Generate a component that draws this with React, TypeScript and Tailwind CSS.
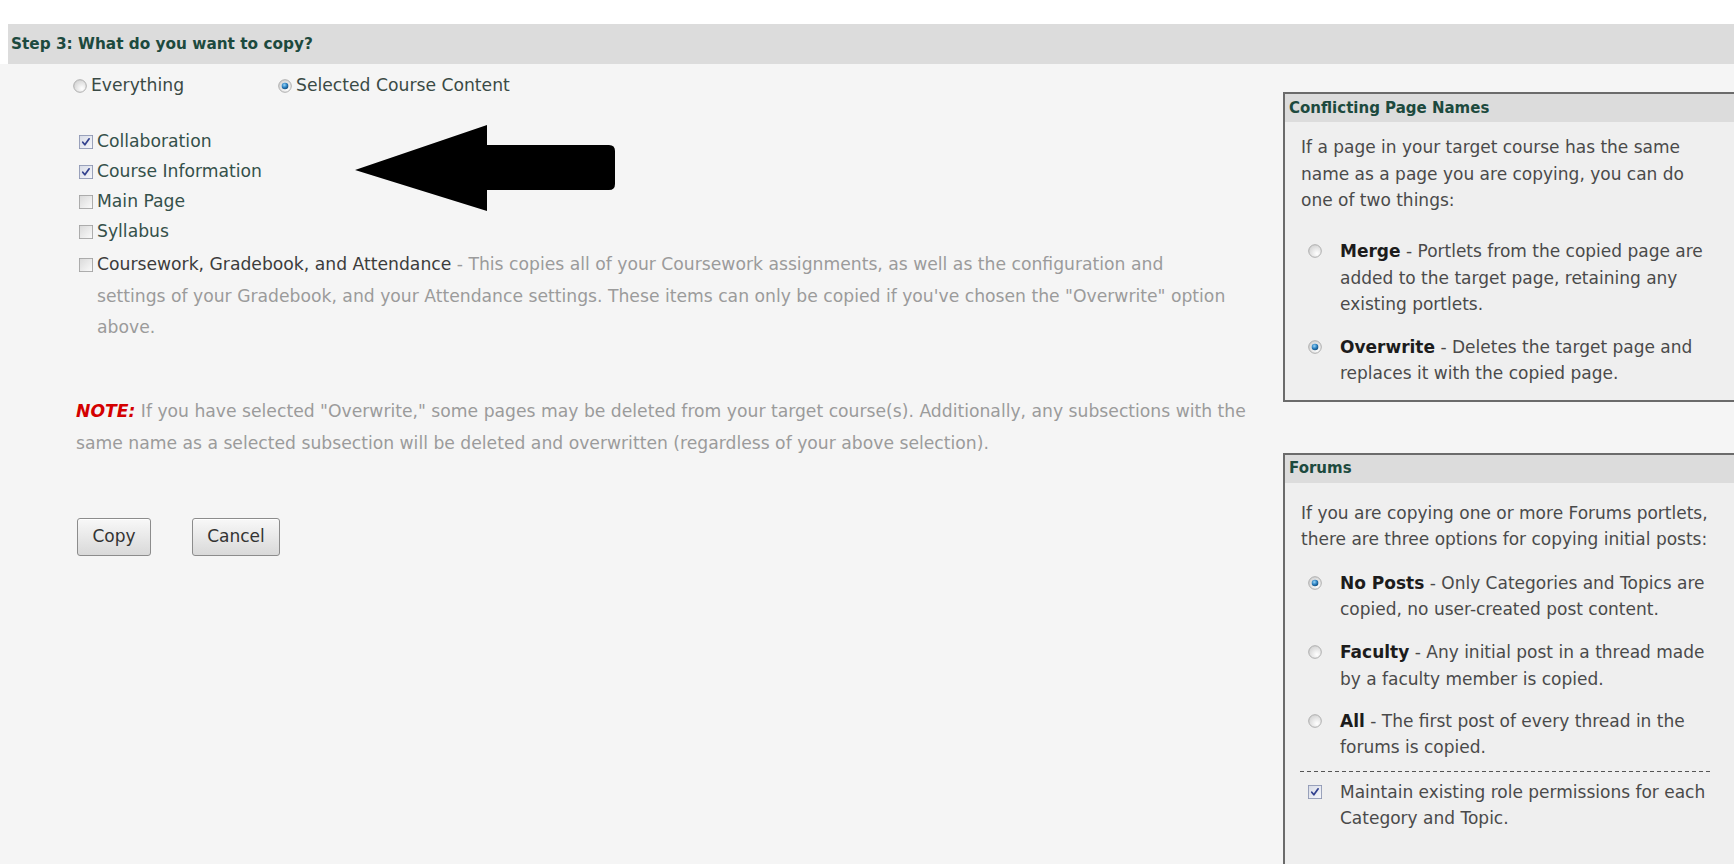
import React from "react";

// XP-style radio button
const Radio = ({ checked = false }: { checked?: boolean }) => (
  <svg width="14" height="14" viewBox="0 0 16 16" className="shrink-0">
    <defs>
      <radialGradient id="radio-face" cx="65%" cy="70%" r="75%">
        <stop offset="0%" stopColor="#ffffff" />
        <stop offset="100%" stopColor="#d2d2d2" />
      </radialGradient>
      <radialGradient id="radio-dot" cx="40%" cy="35%" r="70%">
        <stop offset="0%" stopColor="#9ad6f7" />
        <stop offset="55%" stopColor="#2a7fc0" />
        <stop offset="100%" stopColor="#14466e" />
      </radialGradient>
    </defs>
    <circle cx="8" cy="8" r="7.2" fill="url(#radio-face)" stroke="#a6a6a6" strokeWidth="1" />
    {checked && <circle cx="8" cy="8" r="3.8" fill="url(#radio-dot)" />}
  </svg>
);

// XP-style checkbox
const Check = ({ checked = false }: { checked?: boolean }) => (
  <svg width="14" height="14" viewBox="0 0 16 16" className="shrink-0">
    <defs>
      <linearGradient id="cb-face" x1="0" y1="0" x2="1" y2="1">
        <stop offset="0%" stopColor="#d9d9d9" />
        <stop offset="100%" stopColor="#fbfbfb" />
      </linearGradient>
      <linearGradient id="cb-face-on" x1="0" y1="0" x2="1" y2="1">
        <stop offset="0%" stopColor="#d7dbe6" />
        <stop offset="100%" stopColor="#f7f8fc" />
      </linearGradient>
    </defs>
    <rect
      x="0.5"
      y="0.5"
      width="15"
      height="15"
      fill={checked ? "url(#cb-face-on)" : "url(#cb-face)"}
      stroke={checked ? "#8e97b3" : "#a3a3a3"}
    />
    {checked && (
      <path
        d="M4.3 8.2 L6.7 11.2 L11.6 4.4"
        fill="none"
        stroke="#33428f"
        strokeWidth="2"
        strokeLinecap="round"
        strokeLinejoin="round"
      />
    )}
  </svg>
);

const CheckRow = ({ label, checked = false }: { label: string; checked?: boolean }) => (
  <div className="flex h-[30px] items-center gap-[4px]">
    <Check checked={checked} />
    <span className="text-[#34504a]">{label}</span>
  </div>
);

const PanelHeader = ({ title }: { title: string }) => (
  <div className="flex h-[28px] items-center bg-[#dcdcdc] pl-[4px] text-[15px] font-bold text-[#1d4a3e]">
    {title}
  </div>
);

const Option = ({
  checked,
  label,
  lines,
  className = "",
}: {
  checked: boolean;
  label: string;
  lines: string[];
  className?: string;
}) => (
  <div className={`flex pl-[7px] ${className}`}>
    <div className="flex h-[26.5px] items-center">
      <Radio checked={checked} />
    </div>
    <div className="ml-[18px] whitespace-nowrap">
      <b className="font-bold text-[#1c1c1c]">{label}</b> - {lines[0]}
      {lines.slice(1).map((l) => (
        <React.Fragment key={l}>
          <br />
          {l}
        </React.Fragment>
      ))}
    </div>
  </div>
);

export default function App() {
  return (
    <div className="relative h-[864px] w-[1734px] overflow-hidden bg-[#f5f5f5] font-['DejaVu_Sans',sans-serif]">
      <div className="h-[24px] bg-white" />
      <div className="flex h-[40px] bg-white">
        <div className="w-[8px]" />
        <div className="flex flex-1 items-center bg-[#dcdcdc] pl-[3px] text-[15.3px] font-bold text-[#1d4a3e]">
          Step 3: What do you want to copy?
        </div>
      </div>

      <div className="flex">
        <main className="w-[1283px] shrink-0 pl-[76px] pt-[7px] text-[17.2px]">
          <div className="ml-[-3px] flex h-[30px] items-center text-[#3a4a45]">
            <div className="flex w-[205px] items-center gap-[4px]">
              <Radio />
              <span>Everything</span>
            </div>
            <div className="flex items-center gap-[4px]">
              <Radio checked />
              <span>Selected Course Content</span>
            </div>
          </div>

          <div className="mt-[26px] pl-[3px]">
            <CheckRow label="Collaboration" checked />
            <CheckRow label="Course Information" checked />
            <CheckRow label="Main Page" />
            <CheckRow label="Syllabus" />
            <div className="mt-[2px] flex items-start gap-[4px]">
              <div className="flex h-[31.5px] items-center">
                <Check />
              </div>
              <p className="whitespace-nowrap leading-[31.5px] text-[#9b9b9b]">
                <span className="text-[#3c3c3c]">Coursework, Gradebook, and Attendance</span> - This copies all
                of your Coursework assignments, as well as the configuration and
                <br />
                settings of your Gradebook, and your Attendance settings. These items can only be copied if
                you've chosen the "Overwrite" option
                <br />
                above.
              </p>
            </div>
          </div>

          <p className="mt-[51.5px] whitespace-nowrap leading-[32px] text-[#9b9b9b]">
            <b className="font-bold italic text-[#d40000]">NOTE:</b> If you have selected "Overwrite," some pages
            may be deleted from your target course(s). Additionally, any subsections with the
            <br />
            same name as a selected subsection will be deleted and overwritten (regardless of your above
            selection).
          </p>

          <div className="mt-[59px] flex gap-[41px] pl-[1px]">
            <button className="h-[38px] w-[74px] rounded-[3px] border border-[#8c8c8c] bg-gradient-to-b from-[#f8f8f8] to-[#d9d9d9] text-[17px] text-[#333] shadow-[inset_0_1px_0_#fff]">
              Copy
            </button>
            <button className="h-[38px] w-[88px] rounded-[3px] border border-[#8c8c8c] bg-gradient-to-b from-[#f8f8f8] to-[#d9d9d9] text-[17px] text-[#333] shadow-[inset_0_1px_0_#fff]">
              Cancel
            </button>
          </div>
        </main>

        <aside className="flex-1 pt-[28px]">
          <section className="w-[470px] border-2 border-[#6b6b6b] bg-[#efefef]">
            <PanelHeader title="Conflicting Page Names" />
            <div className="pb-[13px] pl-[16px] pt-[12px] text-[17px] leading-[26.5px] text-[#4a4a4a]">
              <p className="whitespace-nowrap">
                If a page in your target course has the same
                <br />
                name as a page you are copying, you can do
                <br />
                one of two things:
              </p>
              <Option
                className="mt-[24.5px]"
                checked={false}
                label="Merge"
                lines={["Portlets from the copied page are", "added to the target page, retaining any", "existing portlets."]}
              />
              <Option
                className="mt-[16px]"
                checked
                label="Overwrite"
                lines={["Deletes the target page and", "replaces it with the copied page."]}
              />
            </div>
          </section>

          <section className="mt-[51px] w-[470px] border-2 border-[#6b6b6b] bg-[#efefef]">
            <PanelHeader title="Forums" />
            <div className="pb-[60px] pl-[16px] pt-[17px] text-[17px] leading-[26.5px] text-[#4a4a4a]">
              <p className="whitespace-nowrap">
                If you are copying one or more Forums portlets,
                <br />
                there are three options for copying initial posts:
              </p>
              <Option
                className="mt-[17px]"
                checked
                label="No Posts"
                lines={["Only Categories and Topics are", "copied, no user-created post content."]}
              />
              <Option
                className="mt-[16.5px]"
                checked={false}
                label="Faculty"
                lines={["Any initial post in a thread made", "by a faculty member is copied."]}
              />
              <Option
                className="mt-[15.5px]"
                checked={false}
                label="All"
                lines={["The first post of every thread in the", "forums is copied."]}
              />
              <div className="mb-[7px] ml-[-1px] mt-[10px] h-px w-[412px] bg-[repeating-linear-gradient(90deg,#555_0_4px,transparent_4px_7px)]" />
              <div className="flex pl-[7px]">
                <div className="flex h-[26.5px] items-center">
                  <Check checked />
                </div>
                <div className="ml-[18px] whitespace-nowrap">
                  Maintain existing role permissions for each
                  <br />
                  Category and Topic.
                </div>
              </div>
            </div>
          </section>
        </aside>
      </div>

      {/* pointer arrow drawn over the content list */}
      <svg
        className="absolute left-[355px] top-[125px]"
        width="262"
        height="86"
        viewBox="0 0 262 86"
      >
        <path
          d="M0 45 L132 0 L132 20 L254 20 Q260 20 260 26 L260 59 Q260 65 254 65 L132 65 L132 86 Z"
          fill="#000"
        />
      </svg>
    </div>
  );
}
